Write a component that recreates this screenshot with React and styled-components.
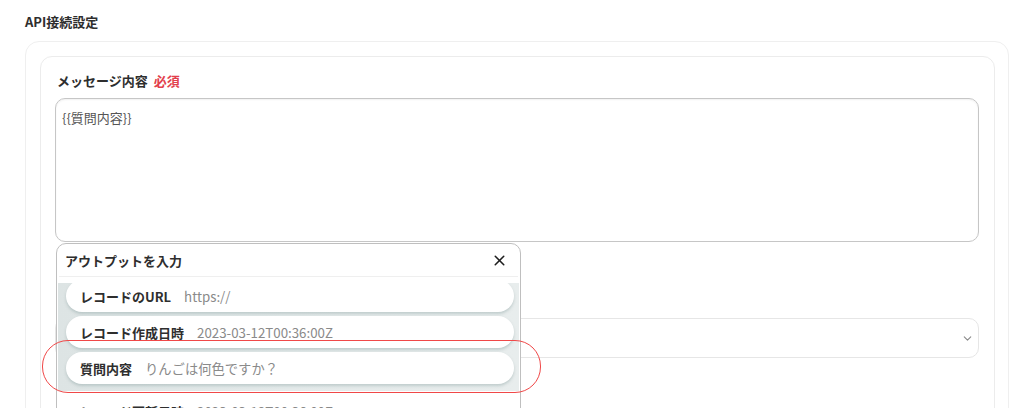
import React from "react";
import styled, { createGlobalStyle } from "styled-components";
import { X, ChevronDown } from "lucide-react";

const outputs = [
  { label: "レコードのURL", value: "https://" },
  { label: "レコード作成日時", value: "2023-03-12T00:36:00Z" },
  { label: "質問内容", value: "りんごは何色ですか？" },
  { label: "レコード更新日時", value: "2023-03-12T00:36:00Z" },
];

const App = () => {
  return (
    <Page>
      <GlobalStyle />
      <Title>API接続設定</Title>
      <OuterCard>
        <InnerCard>
          <Label>
            メッセージ内容 <Required>必須</Required>
          </Label>
          <FieldBlock>
            <MessageBox readOnly defaultValue="{{質問内容}}" />
            <Popup>
              <PopupHeader>
                <PopupTitle>アウトプットを入力</PopupTitle>
                <CloseButton>
                  <X size={17} strokeWidth={2.2} />
                </CloseButton>
              </PopupHeader>
              <OutputList>
                {outputs.map((o, i) => (
                  <OutputItem key={o.label} $last={i === outputs.length - 1}>
                    <ItemLabel>{o.label}</ItemLabel>
                    <ItemValue>{o.value}</ItemValue>
                  </OutputItem>
                ))}
              </OutputList>
            </Popup>
          </FieldBlock>

          <SecondField>
            <Select>
              <ChevronDown size={13} color="#8a8a8a" />
            </Select>
          </SecondField>
        </InnerCard>
      </OuterCard>
      <Highlight />
    </Page>
  );
};

export default App;

const GlobalStyle = createGlobalStyle`
  body {
    margin: 0;
    background: #ffffff;
    font-family: "Noto Sans CJK JP", "Noto Sans", sans-serif;
    color: #333;
  }
`;

const Page = styled.div`
  position: relative;
  height: 408px;
  overflow: hidden;
  padding: 13px 15px 0 25px;
  box-sizing: border-box;
`;

const Title = styled.div`
  font-size: 13px;
  font-weight: 700;
  line-height: 18px;
  margin-bottom: 10px;
  color: #2e2e2e;
`;

const OuterCard = styled.div`
  border: 1px solid #efefef;
  border-radius: 14px;
  padding: 14px 13px 60px 14px;
`;

const InnerCard = styled.div`
  border: 1px solid #ececec;
  border-radius: 12px;
  padding: 15px 15px 80px 14px;
`;

const Label = styled.div`
  font-size: 13px;
  font-weight: 700;
  line-height: 18px;
  padding-left: 2px;
  margin-bottom: 8px;
  color: #2e2e2e;
`;

const Required = styled.span`
  color: #e2404c;
  margin-left: 3px;
`;

const FieldBlock = styled.div`
  position: relative;
`;

const MessageBox = styled.textarea`
  display: block;
  width: 100%;
  height: 144px;
  box-sizing: border-box;
  border: 1px solid #c6c6c6;
  border-radius: 10px;
  box-shadow: inset 0 1px 2px rgba(0, 0, 0, 0.06);
  padding: 9px 6px;
  font-family: "Noto Sans CJK JP", sans-serif;
  font-size: 13px;
  color: #555;
  resize: none;
  outline: none;
`;

const Popup = styled.div`
  position: absolute;
  top: calc(100% + 1px);
  left: 1px;
  width: 465px;
  height: 220px;
  box-sizing: border-box;
  background: #fff;
  border: 1px solid #bfbfbf;
  border-radius: 10px;
  overflow: hidden;
  z-index: 2;
`;

const PopupHeader = styled.div`
  display: flex;
  align-items: center;
  justify-content: space-between;
  height: 32px;
  margin: 0 2px;
  padding: 0 10px 0 6px;
  border-bottom: 1px solid #efefef;
`;

const PopupTitle = styled.div`
  font-size: 13px;
  font-weight: 700;
  color: #2e2e2e;
`;

const CloseButton = styled.div`
  display: flex;
  color: #1e1e1e;
`;

const OutputList = styled.div`
  display: flex;
  flex-direction: column;
  gap: 4px;
  margin: 6px 1px 0;
  padding: 0 5px 0 8px;
  height: 160px;
  overflow: hidden;
  background:
    linear-gradient(180deg, transparent 0 108px, #fff 108px),
    linear-gradient(90deg, #dde4e4 0%, #e4eaea 50%, #e8eded 100%);

  & > :first-child {
    margin-top: -3px;
  }
`;

const OutputItem = styled.div`
  display: flex;
  align-items: center;
  gap: 13px;
  height: 32px;
  flex-shrink: 0;
  padding: 0 14px;
  background: #fff;
  border-radius: 16px;
  box-shadow: ${(p) => (p.$last ? "none" : "0 2px 3px rgba(120, 145, 145, 0.35)")};
  margin-top: ${(p) => (p.$last ? "7px" : "0")};
`;

const ItemLabel = styled.span`
  font-size: 13px;
  font-weight: 700;
  color: #2e2e2e;
`;

const ItemValue = styled.span`
  font-size: 13.3px;
  color: #8a8a8a;
`;

const SecondField = styled.div`
  margin-top: 76px;
`;

const Select = styled.div`
  height: 40px;
  box-sizing: border-box;
  border: 1px solid #e6e6e6;
  border-radius: 10px;
  display: flex;
  align-items: center;
  justify-content: flex-end;
  padding-right: 4px;
`;

const Highlight = styled.div`
  position: absolute;
  left: 42px;
  top: 340px;
  width: 499px;
  height: 53px;
  box-sizing: border-box;
  border: 1.5px solid #f04848;
  border-radius: 26px;
  z-index: 3;
  pointer-events: none;
`;
